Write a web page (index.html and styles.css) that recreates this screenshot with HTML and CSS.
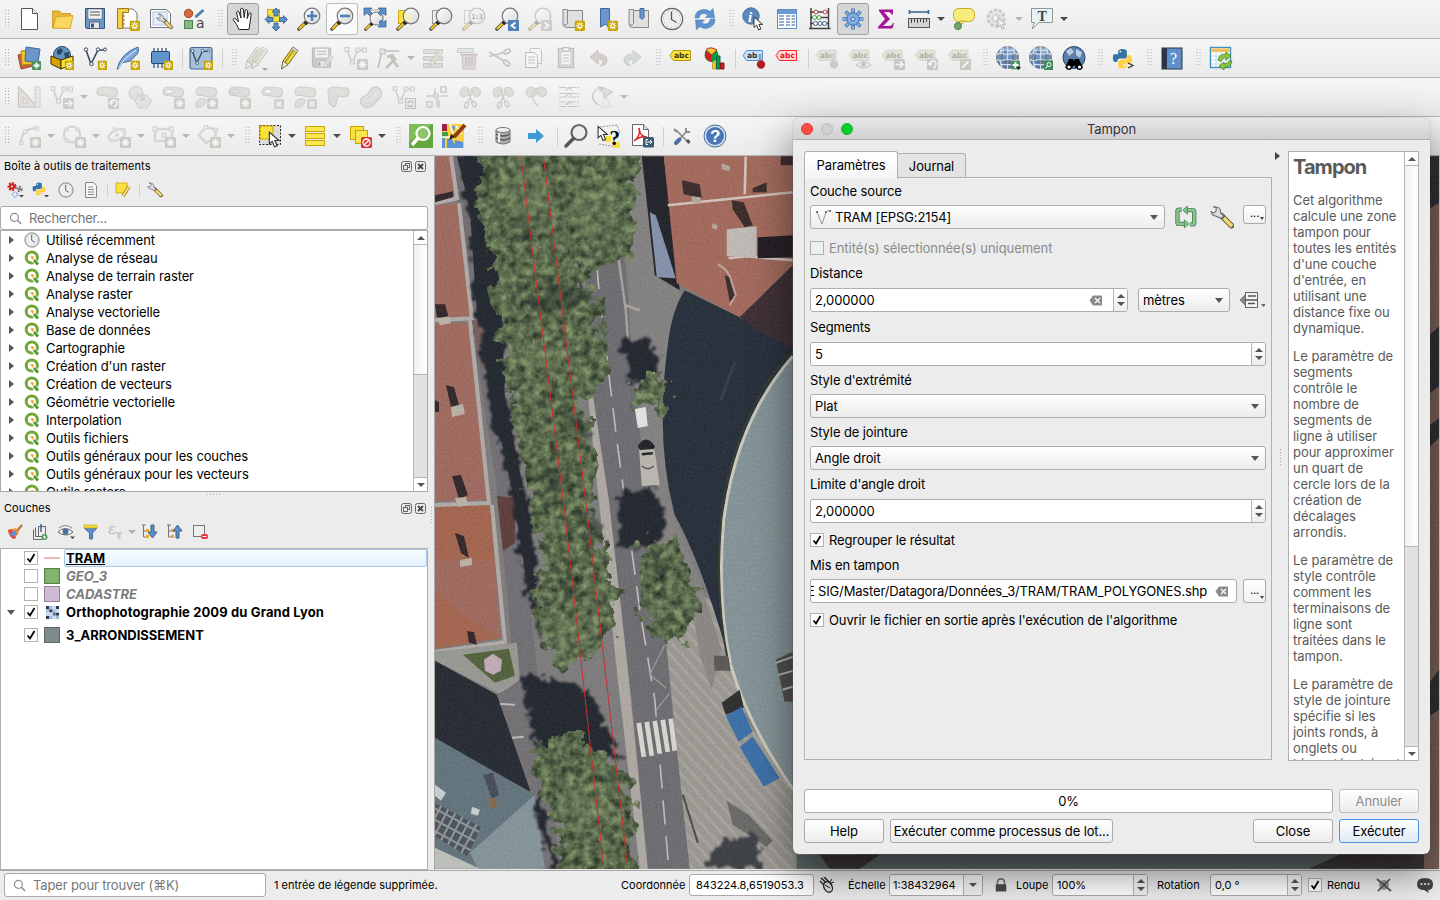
FILE: index.html
```html
<!DOCTYPE html>
<html lang="fr">
<head>
<meta charset="utf-8">
<title>QGIS</title>
<link rel="stylesheet" href="styles.css">
</head>
<body>
<svg class="defs" width="0" height="0">
<defs>
<linearGradient id="glass" x1="0" y1="0" x2="1" y2="1"><stop offset="0" stop-color="#fff"/><stop offset="1" stop-color="#d5d8d8"/></linearGradient>
<linearGradient id="blueg" x1="0" y1="0" x2="0" y2="1"><stop offset="0" stop-color="#8fb4de"/><stop offset="1" stop-color="#3f6fae"/></linearGradient>
<symbol id="star" viewBox="0 0 11 11"><rect width="11" height="11" rx="1.5" fill="#c8a500"/><path d="M5.5 1.5v8M1.6 5.5h7.8M2.8 2.8l5.4 5.4M8.2 2.8L2.8 8.200" stroke="#fff" stroke-width="1.2"/><circle cx="5.500" cy="5.500" r="1.200" fill="#c8a500"/></symbol>
<symbol id="starg" viewBox="0 0 11 11"><rect width="11" height="11" rx="1.500" fill="#8d8a76"/><path d="M5.500 1.500v8M1.600 5.500h7.800M2.800 2.800l5.400 5.400M8.200 2.800L2.800 8.200" stroke="#fff" stroke-width="1.300"/></symbol>
<symbol id="xg" viewBox="0 0 11 11"><rect width="11" height="11" rx="1.500" fill="#a58f8f"/><path d="M3 3l5 5M8 3L3 8" stroke="#fff" stroke-width="2"/></symbol>
<symbol id="plus" viewBox="0 0 9 9"><rect width="9" height="9" rx="1" fill="#4f9060"/><path d="M4.500 1.500v6M1.500 4.500h6" stroke="#fff" stroke-width="1.800"/></symbol>
<symbol id="mag" viewBox="0 0 24 24"><path d="M2 22L9 15" stroke="#555" stroke-width="3.600" stroke-linecap="round"/><path d="M2 22L7.500 16.500" stroke="#f5c518" stroke-width="2.200"/><path d="M8 17l2-2" stroke="#222" stroke-width="3.500"/><circle cx="15" cy="9" r="7.800" fill="url(#glass)" stroke="#777" stroke-width="1.200"/></symbol>
<symbol id="ptr" viewBox="0 0 12 15"><path d="M1 1v10.500l2.600-2.300 2 4.800 2.300-1-2-4.600h3.600z" fill="#fff" stroke="#333" stroke-width="1"/></symbol>
<symbol id="vee" viewBox="0 0 24 24"><path d="M3 4l5 14L15 4h7" fill="none" stroke="#3a4a5c" stroke-width="1.600"/><g fill="#fff" stroke="#3a4a5c"><circle cx="3" cy="3.500" r="1.700"/><circle cx="8.500" cy="18" r="1.700"/><circle cx="15" cy="3.500" r="1.700"/><circle cx="22" cy="3.500" r="1.500"/></g></symbol>
<symbol id="veeg" viewBox="0 0 24 24"><path d="M3 4l5 13L14 4h7" fill="none" stroke="#888" stroke-width="1.500"/><g fill="#ddd" stroke="#888"><rect x="1" y="1.500" width="4" height="4"/><rect x="6.500" y="14" width="4" height="4"/><rect x="12" y="2" width="4" height="4"/><rect x="18.500" y="2" width="4" height="4"/></g></symbol>
<symbol id="clock" viewBox="0 0 24 24"><circle cx="12" cy="12" r="10.700" fill="#eee" stroke="#666" stroke-width="1.200"/><circle cx="12" cy="12" r="8.500" fill="none" stroke="#888" stroke-dasharray=".8 3.650"/><path d="M11.500 4.500v8l5 3" fill="none" stroke="#555" stroke-width="1.300"/></symbol>
<symbol id="py" viewBox="0 0 24 24"><path d="M7 11V4q0-3 5-3t5 3v5q0 3-3 3H9q-3 0-3 4H4q-3 0-3-5t3-4h8" fill="#3673a5"/><path d="M17 8h2q4 0 4 5t-4 5h-7v1h5v2q0 2-5 2t-5-2v-4q0-4 4-4h4q2 0 2-3z" fill="#ffd040"/><circle cx="9.500" cy="4" r="1" fill="#fff"/><circle cx="14.500" cy="20.500" r="1" fill="#fff"/></symbol>
<symbol id="globe" viewBox="0 0 24 24"><circle cx="11.500" cy="11.500" r="11" fill="url(#blueg)" stroke="#667" stroke-width=".8"/><path d="M1 8h21M1 14h21M4 4.500h15M4 18.500h15M11.500 0v23M6 1q-4 10 0 21M17 1q4 10 0 21" fill="none" stroke="#d5dde4" stroke-width="1.300"/><path d="M3 8h4v6H3zM8 4.500h3v3H8zM16 8h4v6h-4zM8 14h7v4H8z" fill="#667" opacity=".6"/></symbol>
<symbol id="tagg" viewBox="0 0 24 24"><path d="M5 4h16v10.500H5L1 9z" fill="#c8c6a8" stroke="#999" stroke-width=".8"/><text x="5" y="12" class="tg">abc</text></symbol>
<symbol id="blob" viewBox="0 0 24 24"><path d="M2 7Q2 2 8 2t9 1q5-1 5.500 4T18 12t-7-1-6-.5Q2 10 2 7z" fill="#b9bcae" stroke="#888" stroke-width="1.200"/></symbol>
<symbol id="blobh" viewBox="0 0 24 24"><use href="#blob"/><ellipse cx="8" cy="6.500" rx="4" ry="2.300" fill="#f5f5f5" stroke="#888"/></symbol>
<symbol id="sciss" viewBox="0 0 24 24"><path d="M2 8q0-6 6-6 4 0 3.500 6Q9 12 5 12 2 11 2 8zM13 4q3-3 7-1 4 3 2 7-2 3-6 1-3-2-3-7z" fill="#b4b8aa" stroke="#888"/><path d="M9 4l5 13M15 5l-5 12" stroke="#888" stroke-width="1.500"/><ellipse cx="8.500" cy="20" rx="1.800" ry="3" transform="rotate(25 8.500 20)" fill="none" stroke="#888" stroke-width="1.500"/><ellipse cx="16" cy="19" rx="1.800" ry="3" transform="rotate(-25 16 19)" fill="none" stroke="#888" stroke-width="1.500"/></symbol>
<symbol id="q" viewBox="0 0 16 16"><circle cx="7.800" cy="7.500" r="5.600" fill="none" stroke="#71a638" stroke-width="3"/><path d="M8.500 8.500l5 6" stroke="#fff" stroke-width="4.600"/><path d="M10 10l4 4.500" stroke="#4e9a2f" stroke-width="2.800"/><path d="M6 6.500l4-.3-.8 4z" fill="#f6a12c"/></symbol>
<symbol id="pencil" viewBox="0 0 24 24"><path d="M6 15L16 1l5 3.500-10 14L5 22z" fill="#f0dc3c" stroke="#77651a" stroke-width="1"/><path d="M8 16.500L18 2.500" stroke="#a9932e" stroke-width="1.500"/><path d="M6 15l5 3.500L4.500 23z" fill="#fbe8c8" stroke="#555" stroke-width=".8"/><path d="M16 1l5 3.500-1.500 2-5-3.500z" fill="#ddd" stroke="#777" stroke-width=".6"/></symbol>
<symbol id="wrench" viewBox="0 0 24 24"><path d="M11 10l10 10" stroke="#6e6740" stroke-width="5.500" stroke-linecap="round"/><path d="M13.500 12.500l8 8" stroke="#f1d775" stroke-width="3.500"/><path d="M3 1.500l3 1v3l-2 2-3-1q1 4 5 4.200L11 13l2.500-2.500L10.500 8Q11 1 3 1.500z" fill="#ddd" stroke="#666" stroke-width="1"/></symbol>
<symbol id="floppy" viewBox="0 0 24 24"><path d="M2.500 1.500h19v20h-18l-1-1z" fill="#6a96c8" stroke="#2e5581" stroke-width="1"/><rect x="5" y="2" width="14" height="10" fill="#f2f2f2" stroke="#555" stroke-width=".5"/><path d="M7 5h10M7 8h10" stroke="#555"/><rect x="6.500" y="15" width="10" height="6.500" fill="#e6e6e6" stroke="#444" stroke-width=".7"/><rect x="8" y="16.500" width="3" height="4" fill="#2f5688"/></symbol>
<symbol id="scroll" viewBox="0 0 24 24"><path d="M6.500 3.500h15v17H6q-4 0-4-3.500V2.500h4.500v14q-1 2-3.500 1.500" fill="#e0e0e0" stroke="#888" stroke-width="1"/></symbol>
<symbol id="search" viewBox="0 0 14 14"><circle cx="5.800" cy="5.800" r="4.300" fill="none" stroke="#888" stroke-width="1.200"/><path d="M9 9l4 4" stroke="#888" stroke-width="1.500"/></symbol>
<symbol id="check" viewBox="0 0 14 14"><path d="M3.500 7.500L6 10.500 10.500 3" fill="none" stroke="#000" stroke-width="1.800"/></symbol>
<symbol id="del" viewBox="0 0 14 11"><path d="M4 .5h9v10H4L.5 5.500z" fill="#8a8a8a"/><path d="M6 3l5 5M11 3L6 8" stroke="#fff" stroke-width="1.200"/></symbol>
<symbol id="float" viewBox="0 0 11 11"><rect x=".5" y=".5" width="10" height="10" rx="2" fill="none" stroke="#666"/><rect x="4.500" y="2.500" width="4" height="4" fill="none" stroke="#666"/><rect x="2.500" y="4.500" width="4" height="4" fill="#ececec" stroke="#666"/></symbol>
<symbol id="close" viewBox="0 0 11 11"><rect x=".5" y=".5" width="10" height="10" rx="2" fill="none" stroke="#666"/><path d="M3 3l5 5M8 3L3 8" stroke="#444" stroke-width="1.800"/></symbol>
</defs>
</svg>

<div class="app">
<div class="bar">
 <i class="grip"></i>
 <b><svg class="ic"><path d="M4.500 1.500h11l5 5v16h-16z" fill="#fff" stroke="#555"/><path d="M15.500 1.500v5h5" fill="#eee" stroke="#555"/></svg></b>
 <b><svg class="ic"><path d="M2.500 21V4h7l2 2.500h9V21z" fill="#e9b738" stroke="#cf9d2a"/><path d="M3 21L6 10l17-1.500L20 21.500z" fill="#fbd75f" stroke="#d8a934"/></svg></b>
 <b><svg class="ic"><use href="#floppy"/></svg></b>
 <b><svg class="ic"><path d="M2 2h15l4 4v15H2z" fill="#fff" stroke="#777"/><path d="M1.500 1.500h11v4h-6v16h-5z" fill="#f5cf4c" stroke="#a07c17"/><path d="M7 5v16M7 9h2M7 13h2M7 17h2" stroke="#a07c17"/><use href="#star" x="13.500" y="13.500" width="10.500" height="10.500"/></svg></b>
 <b><svg class="ic"><path d="M1.500 2.500h16l4 4v14h-20z" fill="#fff" stroke="#777"/><rect x="4" y="5" width="14" height="13" fill="#e7eefb" stroke="#aec2e5"/><use href="#wrench" x="7" y="6" width="17" height="17"/></svg></b>
 <b><svg class="ic"><circle cx="6.500" cy="6.500" r="4.200" fill="#d2693f" stroke="#a5461f"/><path d="M13.500 10l8-7" stroke="#4f7bab" stroke-width="2.800"/><rect x="2.500" y="13.500" width="8" height="8" fill="#88b888" stroke="#4b8352"/><text x="14" y="21" class="ta">a</text></svg></b>
 <i class="grip"></i>
 <b class="on"><svg class="ic"><path d="M8 22.500Q6 17 2 12.500q1-2.500 3.500 0L7.500 15 5.500 5q1-2 2.500 0l2 6-.5-9q1.300-1.700 2.700 0l1 8.500 1-7.500q1.500-1.200 2.500.5l-.5 8 2-5.500q2-.5 2 1L19 16l-1 6.500z" fill="#fff" stroke="#222"/></svg></b>
 <b><svg class="ic"><rect x="3.500" y="2.500" width="12" height="12" fill="#fbe23a" stroke="#c5a91a"/><path d="M12 1l4 4h-2v4h-4V5H8zM12 24l4-4h-2v-4h-4v4H8zM1 12.500l4-4v2h4v4H5v2zM23.500 12.500l-4-4v2h-4v4h4v2z" fill="#5b8ec6" stroke="#2f5b90" stroke-width=".8"/></svg></b>
 <b><svg class="ic"><use href="#mag"/><path d="M15 4v10M10 9h10" stroke="#4f80b8" stroke-width="2.600"/></svg></b>
 <b class="hov"><svg class="ic"><use href="#mag"/><path d="M10 9h10" stroke="#4f80b8" stroke-width="2.600"/></svg></b>
 <b><svg class="ic"><path d="M4 3h16v16" fill="none" stroke="#aaa"/><use href="#mag" x="1" y="4" width="20" height="20"/><path d="M1 1h8L6.500 3.500 9 6 6.500 8.500 4 6 1 8.500zM23 1h-8l2.500 2.500L15 6l2.500 2.500L20 6l3 2.500zM23 20h-8l2.500-2.500L16 15l2-2 2.500 2.500L23 13z" fill="#5b8ec6" stroke="#2f5b90" stroke-width=".7"/></svg></b>
 <b><svg class="ic"><rect x="2.500" y="3.500" width="12" height="13" fill="#fbe23a" stroke="#c5a91a"/><use href="#mag"/><path d="M8.500 6h6v9q-5 0-6-6z" fill="#f6eea5" opacity=".7"/></svg></b>
 <b><svg class="ic"><rect x="3.500" y="3.500" width="12" height="13" fill="#eee" stroke="#999"/><use href="#mag"/></svg></b>
 <b class="off"><svg class="ic"><rect x="2.500" y="3.500" width="12" height="13" fill="#eee" stroke="#999"/><use href="#mag"/><text x="9" y="12" class="t11">1:1</text></svg></b>
 <b><svg class="ic"><use href="#mag"/><rect x="13" y="13" width="11" height="11" fill="#4f80b8"/><path d="M20.500 15.500l-4 3 4 3" fill="none" stroke="#fff" stroke-width="1.800"/></svg></b>
 <b class="off"><svg class="ic"><use href="#mag"/><rect x="13" y="13" width="11" height="11" fill="#999"/><path d="M16.500 15.500l4 3-4 3" fill="none" stroke="#fff" stroke-width="1.800"/></svg></b>
 <b><svg class="ic"><use href="#scroll"/><use href="#star" x="13.500" y="13.500" width="10.500" height="10.500"/></svg></b>
 <b><svg class="ic"><path d="M6.500 1.500h9v20l-4-4.500-5 3z" fill="#6a96c8" stroke="#3c689e"/><use href="#star" x="13.500" y="13.500" width="10.500" height="10.500"/></svg></b>
 <b><svg class="ic"><use href="#scroll"/><path d="M13 1.500h4v9l-2 2-2-2z" fill="#6a96c8" stroke="#3c689e"/></svg></b>
 <b><svg class="ic"><use href="#clock"/></svg></b>
 <b><svg class="ic"><path d="M2 11Q2 3 11 2.500q4 0 6 2l3-3 1.500 9h-9l2.500-3q-8-3-9 3.500zM22 12q0 8-9 9.500-4 0-6-2l-3.500 3-1-9.500h9l-3 3q7 3.500 9-4z" fill="#5f93cf" stroke="#4679b5" stroke-width=".6"/></svg></b>
 <i class="grip"></i>
 <b><svg class="ic"><circle cx="9" cy="9" r="8.200" fill="#5a88bd" stroke="#4a75a6"/><text x="6" y="14.500" class="ti">i</text><use href="#ptr" x="11" y="9" width="12" height="15"/></svg></b>
 <b><svg class="ic"><rect x="2.500" y="2.500" width="19" height="19" fill="#fff" stroke="#5f8fc5"/><path d="M3 3h18v4H3z" fill="#6a9bd3"/><path d="M4 9h5M11 9h4M16.500 9H20M4 12h5M11 12h4M16.500 12H20M4 15h5M11 15h4M16.500 15H20M4 18h5M11 18h4M16.500 18H20" stroke="#6f93bd" stroke-width="1.300"/></svg></b>
 <b><svg class="ic"><path d="M3 1v20M20.500 1v20M1 21.500h21.500M2 5h19M2 10.500h19M2 16.500h19" stroke="#444" stroke-width="1.500" fill="none"/><g fill="#fff"><g stroke="#c44"><circle cx="8" cy="5" r="2"/><circle cx="17" cy="5" r="2"/></g><g stroke="#4a4"><circle cx="6.500" cy="10.500" r="2"/><circle cx="11" cy="10.500" r="2"/></g><g stroke="#468"><circle cx="7.500" cy="16.500" r="2"/><circle cx="12" cy="16.500" r="2"/><circle cx="16.500" cy="16.500" r="2"/></g></g></svg></b>
 <b class="on"><svg class="ic"><g stroke="#3d6fb0" stroke-width="3.600"><path d="M12 1.500v21M1.500 12h21M4.600 4.600l14.800 14.800M19.400 4.600L4.600 19.400"/></g><g stroke="#82aee2" stroke-width="2"><path d="M12 2v20M2 12h20M5 5l14 14M19 5L5 19"/></g><circle cx="12" cy="12" r="6.200" fill="#82aee2" stroke="#3d6fb0"/><circle cx="12" cy="12" r="2" fill="#d0dcec" stroke="#3d6fb0"/></svg></b>
 <b><svg class="ic"><path d="M5 2.500h14v5h-1.500q-.5-2.500-3-2.500H10l6 7-7 7h6q3 0 4-3h1l-1.500 5.500H4V20l7-8-6-8z" fill="#a5129c"/></svg></b>
 <b><svg class="ic"><path d="M2 5h20M2.500 3v4M21.500 3v4" stroke="#3a628f" stroke-width="1.600"/><rect x="1.500" y="11.500" width="21" height="9" fill="#d4d4d4" stroke="#555"/><path d="M4.500 12v4M7.500 12v3M10.500 12v4M13.500 12v3M16.500 12v4M19.500 12v3" stroke="#444"/></svg></b>
 <u></u>
 <b><svg class="ic"><rect x="1.500" y="1.500" width="21" height="13" rx="5" fill="#f9eb7c" stroke="#c6ab27"/><path d="M8 14l-2 6 7-6z" fill="#f9eb7c" stroke="#c6ab27"/><circle cx="6" cy="19" r="3.500" fill="#6fa66f" stroke="#4b7c4b"/></svg></b>
 <b class="off"><svg class="ic"><circle cx="11" cy="11" r="8" fill="#ddd" stroke="#888" stroke-width="3" stroke-dasharray="3.500 1.500"/><circle cx="11" cy="11" r="5" fill="#aaa"/><path d="M9 8l5 3-5 3z" fill="#fff"/><use href="#ptr" x="12" y="10" width="11" height="13"/></svg></b>
 <u class="off"></u>
 <b><svg class="ic"><path d="M1.500 1.500h21v14H9L2 22l2.500-6.500h-3z" fill="#e9f3f3" stroke="#8d9a9a"/><text x="7.500" y="13.500" class="tt">T</text></svg></b>
 <u></u>
</div>

<div class="bar">
 <i class="grip"></i>
 <b><svg class="ic"><path d="M1 9l12-3 3 14-12 3z" fill="#c8643a" stroke="#9a4420"/><path d="M4 5l12-1 1 14-12 1z" fill="#efc22f" stroke="#a8841a"/><path d="M9 1l14 2-2 14-13-2z" fill="#6a96c8" stroke="#3f6898"/><use href="#plus" x="15" y="15" width="9" height="9"/></svg></b>
 <b><svg class="ic"><circle cx="12" cy="9" r="8.500" fill="#6791bd" stroke="#274c77"/><path d="M7 4l4-2 2 3-3 4-3-1zM14 7l5-1v5l-4 1z" fill="#284869"/><path d="M1 10l10 4v9L1 18z" fill="#d9a400" stroke="#3a3000"/><path d="M11 14l12-4v8l-12 5z" fill="#fbe23a" stroke="#3a3000"/><use href="#star" x="14.500" y="14.500" width="9.500" height="9.500"/></svg></b>
 <b><svg class="ic"><use href="#vee"/><use href="#star" x="14.500" y="14.500" width="9.500" height="9.500"/></svg></b>
 <b><svg class="ic"><path d="M1 23Q5 7 22 1q2 6-4 10-3 5-9 5l-3 1-4 6z" fill="#7ba8d8" stroke="#3f6898"/><path d="M2 22Q8 12 20 4" fill="none" stroke="#e8eef4"/><use href="#star" x="14.500" y="14.500" width="9.500" height="9.500"/></svg></b>
 <b><svg class="ic"><path d="M5 2v20M9 2v20M13 2v20M17 2v20" stroke="#27496f" stroke-width="1.200"/><rect x="2.500" y="5.500" width="18" height="12" rx="1" fill="#5f93cf" stroke="#27496f"/><use href="#star" x="14.500" y="14.500" width="9.500" height="9.500"/></svg></b>
 <s></s>
 <b><svg class="ic"><rect x="1" y="1.500" width="22" height="21.500" rx="2" fill="#a5c0dd" stroke="#48698f" stroke-width="1.200"/><use href="#vee" x="1" y="1" width="20" height="22"/><use href="#star" x="14.500" y="14.500" width="9.500" height="9.500"/></svg></b>
 <s></s>
 <i class="grip"></i>
 <b class="off gray"><svg class="ic"><use href="#pencil" x="-4"/><use href="#pencil" x="2"/><path d="M17 22h6l-3 3z" fill="#222"/></svg></b>
 <b><svg class="ic"><use href="#pencil" x="-1"/></svg></b>
 <b class="off gray"><svg class="ic"><use href="#floppy" x="-1" width="23"/><use href="#pencil" x="10" y="8" width="14" height="15"/></svg></b>
 <b class="off"><svg class="ic"><use href="#veeg"/><use href="#starg" x="13" y="13" width="11" height="11"/></svg></b>
 <b class="off"><svg class="ic"><path d="M5 5L1 22M5 5h17" stroke="#666" stroke-width="1.500"/><rect x="3" y="3" width="5" height="5" fill="#ccc" stroke="#666"/><path d="M10 11l5-2 2 3M13 10l8 11M19 12L9 22" fill="none" stroke="#776" stroke-width="2.500"/></svg></b>
 <u class="off"></u>
 <b class="off gray"><svg class="ic"><path d="M1.500 3.500h19v4h-19zM1.500 10.500h19v4h-19zM1.500 17.500h19v4h-19z" fill="#b7bb8d" stroke="#8c8f6e"/><use href="#pencil" x="5" y="1" width="18" height="21"/></svg></b>
 <b class="off"><svg class="ic"><path d="M2.500 2.500h16v4h-16z" fill="#ccc" stroke="#888"/><path d="M7 9h14l-1 14H8z" fill="#c7b1b1" stroke="#8c7070"/><path d="M5 8.500h18M11 11v9M14 11v9M17 11v9" stroke="#8c7070" stroke-width="1.500"/></svg></b>
 <b class="off"><svg class="ic"><path d="M1 6l15 9M1 10.500l15-4" stroke="#777" stroke-width="1.600"/><ellipse cx="19" cy="5.500" rx="3.500" ry="2" transform="rotate(-25 19 5.500)" fill="none" stroke="#777" stroke-width="1.700"/><ellipse cx="18.500" cy="17" rx="3.500" ry="2" transform="rotate(40 18.500 17)" fill="none" stroke="#777" stroke-width="1.700"/></svg></b>
 <b class="off"><svg class="ic"><path d="M9.500 2.500h9l2 2v13h-11z" fill="#fff" stroke="#777"/><path d="M4.500 6.500h9l3 3v12h-12z" fill="#fff" stroke="#666"/><path d="M7 11h7M7 14h7M7 17h7" stroke="#777"/></svg></b>
 <b class="off"><svg class="ic"><rect x="4.500" y="2.500" width="15" height="19" fill="#bbb" stroke="#666" stroke-width="1.300"/><path d="M7 5h10v14H7z" fill="#fff" stroke="#888"/><path d="M9 1.500h6v4H9z" fill="#ddd" stroke="#666"/><path d="M9 9h6M9 12h6M9 15h6" stroke="#777"/></svg></b>
 <b class="off"><svg class="ic"><path d="M3 11l8-7v4q9 0 9 6 0 5-7 6 4-2 3-5-1-2-5-2v5z" fill="#a9938b" stroke="#8a7169"/></svg></b>
 <b class="off"><svg class="ic"><path d="M21 11l-8-7v4q-9 0-9 6 0 5 7 6-4-2-3-5 1-2 5-2v5z" fill="#a3b3a6" stroke="#82937f"/></svg></b>
 <i class="grip"></i>
 <b><svg class="ic"><path d="M4.500 4.500h17v10h-17L1 9.500z" fill="#fbe23a" stroke="#b6941a"/><text x="5" y="12" class="tg">abc</text></svg></b>
 <b><svg class="ic"><circle cx="9.500" cy="9" r="7" fill="#119a3a"/><path d="M9.500 9L4 3.500Q9 0 15 4z" fill="#fbc52b" stroke="#a33"/><path d="M9.500 9V16Q2 14 3 5z" fill="#d71920"/><path d="M10.500 16.500h3.500V23h-3.500z" fill="#fbc52b" stroke="#a80" stroke-width=".6"/><path d="M14.500 10h3.500v13h-3.500z" fill="#119a3a" stroke="#065"/><path d="M18.500 17h3.500v6h-3.500z" fill="#d71920" stroke="#811"/></svg></b>
 <s></s>
 <b><svg class="ic"><path d="M4.500 4.500h16v10h-16L1 9.500z" fill="#c8e0fb" stroke="#4d8fd6"/><text x="5" y="12" class="tg">ab</text><path d="M18 8v8" stroke="#999" stroke-width="2.500"/><circle cx="19" cy="18.500" r="4.200" fill="#b02020"/></svg></b>
 <b><svg class="ic"><path d="M4.500 4.500h17v10h-17L1 9.500z" fill="#ffd9d9" stroke="#f22"/><text x="5" y="12" class="tg red">abc</text></svg></b>
 <s></s>
 <b class="off"><svg class="ic"><use href="#tagg"/><path d="M18 8v8" stroke="#999" stroke-width="2.500"/><circle cx="19" cy="18.500" r="4.200" fill="#a08a8a"/></svg></b>
 <b class="off"><svg class="ic"><use href="#tagg"/><path d="M8 19q7-7 15 0-8 6-15 0z" fill="#ddd" stroke="#777"/><circle cx="15.500" cy="18.500" r="2.300" fill="#777"/></svg></b>
 <b class="off"><svg class="ic"><use href="#tagg"/><rect x="13" y="13" width="11" height="11" rx="1" fill="#888"/><path d="M14.500 18.500h7M19 15.500l3 3-3 3" stroke="#fff" stroke-width="1.700" fill="none"/></svg></b>
 <b class="off"><svg class="ic"><use href="#tagg"/><rect x="13" y="13" width="11" height="11" rx="1" fill="#888"/><path d="M16 18q0-3 3-3t3 3-3 4M14.500 17l1.500 2 2-2" stroke="#fff" stroke-width="1.500" fill="none"/></svg></b>
 <b class="off"><svg class="ic"><use href="#tagg"/><rect x="13" y="13" width="11" height="11" rx="1" fill="#928c70"/><path d="M15.500 21.500l6-6" stroke="#fff" stroke-width="2"/></svg></b>
 <i class="grip"></i>
 <b><svg class="ic"><use href="#globe"/><use href="#plus" x="15" y="14.500" width="9" height="9"/><path d="M20 21h5l-2.500 3z" fill="#222"/></svg></b>
 <b><svg class="ic"><use href="#globe"/><rect x="15" y="14.500" width="9" height="9.500" fill="#3f8a58"/><circle cx="20" cy="18.500" r="2" fill="none" stroke="#fff"/><path d="M18.500 20l-2 2.500" stroke="#fff"/></svg></b>
 <b><svg class="ic"><circle cx="12" cy="11.500" r="11" fill="#5a80ad" stroke="#24446a"/><path d="M4 5l5-3 3 4-5 4zM14 3l6 3-2 6-4-3z" fill="#b9cce0"/><path d="M7 13h4l1 2 1-2h4l4 9h-7l-2-3-2 3H3z" fill="#000"/><circle cx="7" cy="21" r="2.300" fill="#fff" stroke="#000" stroke-width="1.400"/><circle cx="17.500" cy="21" r="2.300" fill="#fff" stroke="#000" stroke-width="1.400"/></svg></b>
 <i class="grip"></i>
 <b><svg class="ic"><use href="#py" x="1" y="2" width="21" height="21"/><path d="M17 17l5 2.500-5 2.500" fill="none" stroke="#333" stroke-width="1.300"/></svg></b>
 <i class="grip"></i>
 <b><svg class="ic"><rect x="2" y="2" width="20" height="21" fill="#5f8fc7" stroke="#27364a"/><path d="M2 2h5v21H2z" fill="#27364a"/><text x="10" y="17.500" class="tq">?</text></svg></b>
 <i class="grip"></i>
 <b><svg class="ic"><rect x="1.500" y="1.500" width="20" height="20" fill="#fff" stroke="#3c93b9" stroke-width="1.400"/><path d="M2.500 2.500h18v3.500h-18z" fill="#f5c05a"/><path d="M2 10h19M2 14h19M2 18h19M7 6v15M12 6v15M17 6v15" stroke="#b6dbec"/><path d="M9 14q1-6 8-6V6l5 4-5 4v-2.500q-4 0-5 4zM23 15q-1 6-8 6.500V24l-5-4 5-4v2q4 0 5-3z" fill="#8cc63c" stroke="#45801a" stroke-width=".8"/></svg></b>
</div>

<div class="bar dis">
 <i class="grip"></i>
 <b class="off"><svg class="ic"><path d="M1.500 1.500l19 20.500h-19z" fill="#d6bdb6" stroke="#776" stroke-width="1.200"/><path d="M6 12v6h5z" fill="#f3f3f3" stroke="#776"/><path d="M18 2h5v20h-5zM18 5h3M18 9h3M18 13h3M18 17h3" fill="#ddd" stroke="#888"/></svg></b>
 <b class="off"><svg class="ic"><use href="#veeg"/><rect x="13" y="13" width="11" height="11" rx="1" fill="#888"/><path d="M14.500 18.500h7M19 15.500l3 3-3 3" stroke="#fff" stroke-width="1.700" fill="none"/></svg></b>
 <u class="off"></u>
 <b class="off"><svg class="ic"><use href="#blob"/><rect x="13" y="13" width="11" height="11" rx="1" fill="#888"/><path d="M16 18q0-3 3-3t3 3-3 4M14.500 17l1.500 2 2-2" stroke="#fff" stroke-width="1.500" fill="none"/></svg></b>
 <b class="off"><svg class="ic"><circle cx="8" cy="8" r="7" fill="#c3c6bb" stroke="#888"/><path d="M11 10h8l4.500 6-4.500 7h-8l-4-7z" fill="#c3c8cc" stroke="#888"/><path d="M8 8l8 7M16 11v4h-4" stroke="#777" fill="none"/></svg></b>
 <b class="off"><svg class="ic"><use href="#blobh"/><use href="#starg" x="13" y="13" width="11" height="11"/></svg></b>
 <b class="off"><svg class="ic"><use href="#blob"/><path d="M2 22q-1-6 4-8 7-1 6 2-2 8-10 6z" fill="#b9bcae" stroke="#888"/><use href="#starg" x="13" y="13" width="11" height="11"/></svg></b>
 <b class="off"><svg class="ic"><use href="#blob"/><ellipse cx="8" cy="6.500" rx="4" ry="2.300" fill="#bbb" stroke="#888"/><use href="#starg" x="13" y="13" width="11" height="11"/></svg></b>
 <b class="off"><svg class="ic"><use href="#blobh"/><use href="#xg" x="14" y="14" width="10" height="10"/></svg></b>
 <b class="off"><svg class="ic"><use href="#blob"/><path d="M2 22q-1-6 4-8 7-1 6 2-2 8-10 6z" fill="#b9bcae" stroke="#888"/><use href="#xg" x="14" y="14" width="10" height="10"/></svg></b>
 <b class="off"><svg class="ic"><path d="M2 7q0-5 7-5l8 1q6-1 6 4t-6 5l-5-1q-1 2-2 9-2 3-4 1-4-3-3-8z" fill="#b9bcae" stroke="#888" stroke-width="1.200"/></svg></b>
 <b class="off"><svg class="ic"><path d="M12 4q5-4 9 0t-1 10l-7 7q-6 3-10-1t1-8q6-2 8-8z" fill="#c6c8ba" stroke="#888" stroke-width="1.400"/><path d="M14 6q4-3 6 1t-8 11q-5 2-7-1t4-4q4-1 5-7z" fill="none" stroke="#999"/></svg></b>
 <b class="off"><svg class="ic"><use href="#veeg"/><rect x="13.500" y="13.500" width="10" height="10" fill="#ddd" stroke="#666"/><path d="M15.500 18q3-4 6 0M21.500 20q-3 3-6 0" stroke="#666" fill="none" stroke-width="1.500"/></svg></b>
 <b class="off"><svg class="ic"><path d="M10 3v8H1M14 23v-8M16 11h7M10 11h4M12 13v9" stroke="#888" stroke-width="1.500" fill="none"/><rect x="9" y="9" width="4" height="4" fill="#ccc" stroke="#777"/><use href="#starg" x="15" y="1" width="7" height="7"/><use href="#xg" x="1" y="16" width="7" height="7"/></svg></b>
 <b class="off"><svg class="ic"><use href="#sciss"/></svg></b>
 <b class="off"><svg class="ic"><use href="#sciss"/></svg></b>
 <b class="off"><svg class="ic"><path d="M2 8q0-6 6-6 3 1 4 3 3-5 9-2 3 4 1 7-4 4-9-1-4 4-8 3-3-1-3-4z" fill="#b4b8aa" stroke="#888"/><path d="M8 8q0 8 6 13M9 4h6M9 7h6" stroke="#888" stroke-width="1.300" fill="none"/></svg></b>
 <b class="off"><svg class="ic"><path d="M2 2.500h20M2 8.500h20M2 12h20M2 17h20M2 21.500h20M9 5.500l3-3 3 3M9 11l3-3 3 3M9 20l3-3 3 3" fill="none" stroke="#777" stroke-width="1.200" stroke-dasharray="8 1"/></svg></b>
 <b class="off"><svg class="ic"><path d="M12 2l11 5-9 6z" fill="#a9b6a9" stroke="#888"/><path d="M16 12l5 10H11z" fill="#eee" stroke="#aaa"/><path d="M9 20Q-2 13 6 5l6-2M8 2l4 1-2 4" fill="none" stroke="#777" stroke-width="1.300"/></svg></b>
 <u class="off"></u>
</div>

<div class="bar">
 <i class="grip"></i>
 <b class="off"><svg class="ic"><path d="M4 19Q4 5 19 4" fill="none" stroke="#999" stroke-width="2"/><g fill="#ddd" stroke="#999"><rect x="2.500" y="17" width="3.500" height="3.500"/><rect x="6.500" y="6" width="3.500" height="3.500"/><rect x="18" y="2.500" width="3.500" height="3.500"/></g><use href="#starg" x="13" y="13" width="11" height="11"/></svg></b><u class="off"></u>
 <b class="off"><svg class="ic"><circle cx="10" cy="10.500" r="8" fill="none" stroke="#aaa" stroke-width="2.500"/><g fill="#ddd" stroke="#999"><rect x="3" y="4" width="3" height="3"/><rect x="14" y="4" width="3" height="3"/><rect x="3" y="15" width="3" height="3"/></g><use href="#starg" x="13" y="13" width="11" height="11"/></svg></b><u class="off"></u>
 <b class="off"><svg class="ic"><ellipse cx="10" cy="11" rx="9" ry="5" transform="rotate(-25 10 11)" fill="none" stroke="#aaa" stroke-width="2.200"/><circle cx="10" cy="11" r="1.800" fill="#999"/><g fill="#ddd" stroke="#999"><rect x="6" y="4" width="3" height="3"/><rect x="15" y="5" width="3" height="3"/></g><use href="#starg" x="13" y="13" width="11" height="11"/></svg></b><u class="off"></u>
 <b class="off"><svg class="ic"><rect x="3" y="5" width="17" height="12" fill="none" stroke="#aaa" stroke-width="2.500"/><g fill="#ddd" stroke="#999"><rect x="1" y="3" width="4" height="4"/><rect x="10" y="9" width="4" height="4"/><rect x="17.500" y="3" width="4" height="4"/></g><use href="#starg" x="13" y="13" width="11" height="11"/></svg></b><u class="off"></u>
 <b class="off"><svg class="ic"><path d="M9 3l10 3-1 9-9 4-7-8z" fill="none" stroke="#aaa" stroke-width="2.500"/><g fill="#ddd" stroke="#999"><rect x="7" y="1.500" width="3.500" height="3.500"/><rect x="17" y="4" width="3.500" height="3.500"/></g><use href="#starg" x="13" y="13" width="11" height="11"/></svg></b><u class="off"></u>
 <i class="grip"></i>
 <b><svg class="ic"><rect x="1.500" y="1.500" width="21" height="19" fill="#ddd" stroke="#222" stroke-dasharray="2 1.500"/><rect x="2" y="2" width="13" height="13" fill="#fbe23a" stroke="#c8a500"/><use href="#ptr" x="10" y="7" width="14" height="17"/></svg></b><u></u>
 <b><svg class="ic"><path d="M2.500 2.500h19v5h-19zM2.500 9.500h19v5h-19zM2.500 16.500h19v5h-19z" fill="#fbe650" stroke="#c8a500"/></svg></b><u></u>
 <b><svg class="ic"><rect x="2.500" y="2.500" width="13" height="13" fill="#fbe23a" stroke="#c8a500"/><rect x="7.500" y="6.500" width="12" height="13" fill="#fbe650" stroke="#c8a500"/><rect x="13" y="13" width="11" height="11" rx="1.500" fill="#d33"/><circle cx="18.500" cy="18.500" r="3.500" fill="none" stroke="#fff" stroke-width="1.300"/><path d="M16 21l5-5" stroke="#fff" stroke-width="1.300"/></svg></b><u></u>
 <i class="grip"></i>
 <b><svg class="ic"><rect width="24" height="24" fill="#64a83f"/><path d="M0 0h24L0 18z" fill="#80bd58"/><circle cx="14" cy="9.500" r="6.500" fill="#8dc569" stroke="#fff" stroke-width="2.200"/><path d="M9 14l-6 7" stroke="#fff" stroke-width="3.500"/></svg></b>
 <b><svg class="ic"><rect width="22" height="24" fill="#f9ce3f"/><path d="M0 0h5v7H0z" fill="#a02040"/><path d="M5 15h5l4 9H5zM0 14h3v10H0zM13 16l8 2v6h-9zM9 2h4l-1 6z" fill="#5b95d8"/><path d="M0 8h6v5H0z" fill="#3f9e4a"/><path d="M0 13h9M8 0l3 9M14 2l6 8" stroke="#fff" stroke-width="1.500" fill="none"/><path d="M23 1L12 13" stroke="#8a3d14" stroke-width="4"/><path d="M13 13l-6 3 2-6z" fill="#222"/></svg></b>
 <i class="grip"></i>
 <b><svg class="ic"><path d="M5 6v12q7 4 14 0V6z" fill="#aaa" stroke="#777"/><ellipse cx="12" cy="6" rx="7" ry="2.500" fill="#eee" stroke="#777"/><path d="M5 10q7 4 14 0M5 14q7 4 14 0" fill="none" stroke="#555" stroke-width="1.300"/><path d="M8 9v9" stroke="#eee" stroke-width="2"/></svg></b>
 <b><svg class="ic"><path d="M4 9h8V5l8 7-8 7v-4H4z" fill="#3b9ad3"/></svg></b>
 <s></s>
 <b><svg class="ic"><circle cx="15" cy="8.500" r="7.500" fill="#eee" stroke="#666" stroke-width="2.200"/><path d="M9.500 14.500L2 22" stroke="#555" stroke-width="3.500" stroke-linecap="round"/></svg></b>
 <b><svg class="ic"><path d="M3 3l17-2 3 8M2 20l18 3" stroke="#999" fill="none" stroke-dasharray="2 1"/><path d="M8 12h6v6H8zM16 18h7v6h-7z" fill="#f9e03c"/><use href="#ptr" x="0" y="1" width="13" height="17"/><text x="12.500" y="20.500" class="tw">?</text></svg></b>
 <b><svg class="ic"><path d="M2.500.5h11l5 5v16h-16z" fill="#fff" stroke="#666"/><path d="M13.500.5v5h5" fill="#ddd" stroke="#666"/><path d="M4 17q7-5 5-13 1 9 8 9-7-1-13 4z" fill="none" stroke="#d22" stroke-width="1.500"/><rect x="13" y="13" width="11" height="10.500" rx="1.500" fill="#3d5a73"/><path d="M18 15.500h-2v5h2M17 18h5M20 16l2 2-2 2" stroke="#fff" fill="none"/></svg></b>
 <s></s>
 <b><svg class="ic"><path d="M6 6l12 12M17 7L7 18" stroke="#888" stroke-width="1.600"/><path d="M16 4v4h4M4 5l3 3" stroke="#888" stroke-width="1.800" fill="none"/><path d="M9.500 15.500L6 19" stroke="#4a6fa5" stroke-width="4" stroke-linecap="round"/><path d="M17 16l2.500 3" stroke="#555" stroke-width="3"/></svg></b>
 <b><svg class="ic"><circle cx="12" cy="12" r="11" fill="#dbe5f3" stroke="#41689f" stroke-width="1"/><circle cx="12" cy="12" r="9" fill="#4b77b8"/><text x="7" y="18" class="th">?</text></svg></b>
</div>

<div class="main">
<div class="left">
 <div class="dock">
  <div class="dt"><span>Boîte à outils de traitements</span><svg class="wb"><use href="#float"/></svg><svg class="wb"><use href="#close"/></svg></div>
  <div class="dtools">
   <svg class="i16" viewBox="0 0 16 16"><g fill="none" stroke-dasharray="2 1.200"><circle cx="5" cy="4.500" r="3.500" stroke="#c22" stroke-width="2"/><circle cx="12.500" cy="7" r="2.400" stroke="#777" stroke-width="1.600"/><circle cx="8" cy="12.500" r="2.500" stroke="#89b1e3" stroke-width="1.600"/></g><circle cx="5" cy="4.500" r="3" fill="#c22"/><circle cx="5" cy="4.500" r="1" fill="#eee"/><circle cx="12.500" cy="7" r="1.500" fill="#777"/><path d="M12 13h5l-2.500 2.500z" fill="#444"/></svg>
   <svg class="i16" viewBox="0 0 16 16"><use href="#py" width="14" height="14"/><path d="M12 13h5l-2.500 2.500z" fill="#444"/></svg>
   <svg class="i16"><use href="#clock"/></svg>
   <svg class="i16" viewBox="0 0 16 16"><path d="M2.500.5h8l3 3v12h-11z" fill="#f5f5f5" stroke="#888"/><path d="M5 5h5M5 7.500h6M5 10h6M5 12.500h6" stroke="#888"/></svg>
   <em></em>
   <svg class="i16" viewBox="0 0 16 16"><path d="M1 1h11v10H1z" fill="#fbe23a" stroke="#d3b32a"/><path d="M14 4.500L8 14" stroke="#9a8a3a" stroke-width="3.500"/><path d="M14 4.500L8 14" stroke="#f5dd6c" stroke-width="2"/></svg>
   <em></em>
   <svg class="i16"><use href="#wrench"/></svg>
  </div>
  <div class="find"><svg class="s13"><use href="#search"/></svg><span>Rechercher...</span></div>
  <div class="tree">
   <ul>
    <li><svg class="i16"><use href="#clock"/></svg>Utilisé récemment</li>
    <li><svg class="i16"><use href="#q"/></svg>Analyse de réseau</li>
    <li><svg class="i16"><use href="#q"/></svg>Analyse de terrain raster</li>
    <li><svg class="i16"><use href="#q"/></svg>Analyse raster</li>
    <li><svg class="i16"><use href="#q"/></svg>Analyse vectorielle</li>
    <li><svg class="i16"><use href="#q"/></svg>Base de données</li>
    <li><svg class="i16"><use href="#q"/></svg>Cartographie</li>
    <li><svg class="i16"><use href="#q"/></svg>Création d'un raster</li>
    <li><svg class="i16"><use href="#q"/></svg>Création de vecteurs</li>
    <li><svg class="i16"><use href="#q"/></svg>Géométrie vectorielle</li>
    <li><svg class="i16"><use href="#q"/></svg>Interpolation</li>
    <li><svg class="i16"><use href="#q"/></svg>Outils fichiers</li>
    <li><svg class="i16"><use href="#q"/></svg>Outils généraux pour les couches</li>
    <li><svg class="i16"><use href="#q"/></svg>Outils généraux pour les vecteurs</li>
    <li><svg class="i16"><use href="#q"/></svg>Outils rasters</li>
   </ul>
   <div class="sb"><i class="up"></i><div class="thumb t1"></div><div class="track"></div><i class="down"></i></div>
  </div>
 </div>
 <div class="split"></div>
 <div class="dock grow">
  <div class="dt"><span>Couches</span><svg class="wb"><use href="#float"/></svg><svg class="wb"><use href="#close"/></svg></div>
  <div class="dtools two">
   <svg class="i16" viewBox="0 0 16 16"><path d="M1 6l8-2 3 5-5 6q-5-2-6-9z" fill="#f29a2e"/><path d="M1 6l4-1 4 9-2 1q-5-2-6-9z" fill="#e2483c"/><path d="M3 10l5-4 2 4-4 3z" fill="#5c93d0"/><path d="M10 7l5-6" stroke="#c07a3a" stroke-width="2.500"/></svg>
   <svg class="i16" viewBox="0 0 16 16"><path d="M1.500 5.500v10h9M3.500 3.500v9h9M6.500 2.500h7v10h-7z" fill="none" stroke="#666"/><path d="M9 0v8" stroke="#369" stroke-width="1.500"/><circle cx="12.500" cy="13" r="3" fill="#4f9a5c"/><path d="M12.500 11.500v3M11 13h3" stroke="#fff"/></svg>
   <svg class="i16" viewBox="0 0 16 16"><path d="M0 8q7-7 15 0-7 6-15 0z" fill="#fff" stroke="#666"/><circle cx="7.500" cy="7.500" r="3" fill="#456f9f"/><path d="M1 4q6-5 13 0" fill="none" stroke="#888"/><path d="M12 12.500h5L14.500 15z" fill="#444"/></svg>
   <svg class="i16" viewBox="0 0 16 16"><path d="M1 4h13L9.500 9v6h-3V9z" fill="#5f8fc7" stroke="#476f9f"/><path d="M1 1h13v3H1z" fill="#f4d93a" stroke="#c7ad27" stroke-width=".7"/></svg>
   <svg class="i16 off" viewBox="0 0 16 16"><text x="0" y="10" class="te">ε</text><path d="M7 8h8l-2.500 3v4h-3v-4z" fill="#999"/></svg>
   <u class="off"></u>
   <svg class="i16" viewBox="0 0 16 16"><path d="M0 1h4M1.500 1v12H5M1.500 7H5" stroke="#777" fill="none"/><path d="M4 5h3v3H4zM4 11h3v3H4z" fill="#f5a623"/><path d="M9 1h3v7h3l-4.500 6L6 8h3z" fill="#5f8fc7" stroke="#36618f"/></svg>
   <svg class="i16" viewBox="0 0 16 16"><path d="M0 1h4M1.500 1v12H5M1.500 7H5" stroke="#777" fill="none"/><path d="M4 5h3v3H4zM4 11h3v3H4z" fill="#f5a623"/><path d="M9 14h3V7h3l-4.500-6L6 7h3z" fill="#5f8fc7" stroke="#36618f"/></svg>
   <svg class="i16" viewBox="0 0 16 16"><rect x="1.500" y="1.500" width="11" height="11" fill="#eee" stroke="#777"/><rect x="9" y="10" width="7" height="5" rx="2" fill="#e33"/><path d="M10.500 12.500h4" stroke="#fff"/></svg>
  </div>
  <div class="layers">
   <div class="ly"><span class="cb"><svg><use href="#check"/></svg></span><span class="sw line"></span><span class="nm sel">TRAM</span></div>
   <div class="ly"><span class="cb"></span><span class="sw green"></span><span class="nm dim">GEO_3</span></div>
   <div class="ly"><span class="cb"></span><span class="sw lilac"></span><span class="nm dim">CADASTRE</span></div>
   <div class="ly open"><span class="cb"><svg><use href="#check"/></svg></span><svg class="sw ras" viewBox="0 0 4 4"><path d="M0 0h1v1H0zM3 0h1v1H3zM0 3h1v1H0zM1 1h1v1H1zM3 2h1v1H3z" fill="#2d3a55"/><path d="M1 0h1v1H1zM0 1h1v1H0zM2 1h1v1H2zM1 3h1v1H1zM3 3h1v1H3z" fill="#9fbbdc"/><path d="M2 2h1v1H2z" fill="#55709a"/><path d="M2 0h1v1H2zM1 2h1v1H1zM0 2h1v1H0zM3 1h1v1H3zM2 3h1v1H2z" fill="#c9dbef"/></svg><span class="nm wide">Orthophotographie 2009 du Grand Lyon</span></div>
   <div class="ly last"><span class="cb"><svg><use href="#check"/></svg></span><span class="sw slate"></span><span class="nm">3_ARRONDISSEMENT</span></div>
  </div>
 </div>
</div>

<svg class="map" viewBox="435 156 1005 713">
<defs>
<filter id="leaf" filterUnits="userSpaceOnUse" x="430" y="150" width="370" height="725" color-interpolation-filters="sRGB"><feTurbulence type="fractalNoise" baseFrequency=".07" numOctaves="3" seed="7" result="m"/><feDisplacementMap in="SourceGraphic" in2="m" scale="34" xChannelSelector="R" yChannelSelector="G" result="d"/><feTurbulence type="fractalNoise" baseFrequency=".12" numOctaves="3" seed="4" result="n"/><feColorMatrix in="n" values=".520 0 .150 0 .010 .580 0 .150 0 .045 .400 0 .100 0 .040 0 0 0 0 1"/><feGaussianBlur stdDeviation=".7" result="c"/><feComposite in="c" in2="d" operator="in"/><feGaussianBlur stdDeviation=".4"/></filter>
<filter id="rag" filterUnits="userSpaceOnUse" x="430" y="150" width="370" height="725"><feTurbulence type="fractalNoise" baseFrequency=".09" numOctaves="3" seed="9" result="n"/><feDisplacementMap in="SourceGraphic" in2="n" scale="22" xChannelSelector="R" yChannelSelector="G"/><feGaussianBlur stdDeviation=".9"/></filter>
<filter id="soft"><feGaussianBlur stdDeviation=".7"/></filter>
<filter id="grain" x="0" y="0" width="1" height="1" color-interpolation-filters="sRGB"><feTurbulence type="fractalNoise" baseFrequency=".45" numOctaves="3" seed="2"/><feColorMatrix values="1.500 0 0 0 -.25 1.500 0 0 0 -.25 1.500 0 0 0 -.25 0 0 0 0 1"/></filter>
<pattern id="pave" width="11" height="9" patternUnits="userSpaceOnUse" patternTransform="rotate(48)"><path d="M0 3h11" stroke="#b9b4ad" stroke-width="2.500" opacity=".5"/></pattern>
<pattern id="dome" width="5" height="5" patternUnits="userSpaceOnUse" patternTransform="rotate(3)"><path d="M0 1h5" stroke="#768b90" stroke-width="1" opacity=".35"/></pattern>
<pattern id="pan" width="8" height="10" patternUnits="userSpaceOnUse" patternTransform="rotate(28)"><path d="M1 1h6v8H1z" fill="#4d535e"/></pattern>
</defs>
<rect x="435" y="156" width="1005" height="713" fill="#7f7d7d"/>
<g filter="url(#soft)">
<path d="M585 250L624 250L632 340L648 480L672 640L693 869H648L632 700L604 500L590 390Z" fill="#6e6d72"/>
<path d="M624 156L646 156L680 290L664 390L668 500L725 645L700 660L672 640L645 480L630 330Z" fill="#858282"/>
<path d="M587 385L592 388L609 500L627 660L648 869H640L618 680L600 510Z" fill="#b1aba6"/>
<path d="M597 265L600 300L617 440L640 610L655 700L669 869" fill="none" stroke="#c3c1be" stroke-width="1.600" stroke-dasharray="24 12"/>
<path d="M619 260L626 310L628 338M626 305l14 5" fill="none" stroke="#aaa5a0" stroke-width="2.500"/>
<path d="M666 640L690 590L712 600L728 650L748 720L793 792L870 869H690L676 740Z" fill="#9c9892"/>
<path d="M666 640L690 590L712 600L728 650L748 720L793 792L793 869H690L676 740Z" fill="url(#pave)"/>
<path d="M690 590L705 596L722 650L712 690L700 655Z" fill="#8b8885"/>
<path d="M727 801l22 14 24 26-6 6-34-22z" fill="#6b6a68"/><path d="M683 795l15 48" stroke="#4b4949" stroke-width="2"/>
<g stroke="#dcdad3" stroke-width="4.800"><path d="M639 723l5 34M647 722l5 34M655 721l5 33M663 720l5 32M671 719l4 32"/></g>
<path d="M665 645l-15 30 16 13M670 693l-14 18" stroke="#9f9c98" stroke-width="1.200" fill="none"/>
<path d="M642 156H664L680 290L655 275Z" fill="#22242c"/><path d="M650 212L656 215L676 278L657 277Z" fill="#8593ac"/>
<path d="M664 156H793V265L740 317L677 283Z" fill="#a56a5c"/>
<path d="M668 205L793 192M746 156l-1 38M793 260l-46-4-18 2" stroke="#d6c6c0" stroke-width="2.600" fill="none"/>
<path d="M727 229l30-3v31l-30-1z" fill="#c2bdb8"/><path d="M758 237L793 235V257L758 258Z" fill="#241f22"/>
<path d="M682 180l18 4 2 14-18-4zM732 200l12 2 9 23-8 2-12-18zM753 188l14-6v10h-14zM781 156h12v9h-12zM725 275l6 2 5 20-6 4z" fill="#3b2b2c"/><path d="M722 163l8 3v5l-8-2zM692 196l9 1v6l-9-1zM713 223l5 2-1 4-5-1z" fill="#b7a9a2"/><path d="M718 264q12 6 14 18l4 13-6 10" fill="none" stroke="#bfa59b" stroke-width="2"/>
<path d="M685 290L740 317L770 334L793 345V356Q740 420 726 510Q718 590 725 645Q700 560 675 515Q655 440 668 345Q672 310 685 290Z" fill="#272f3b"/>
<path d="M740 317L793 265V348L765 334Z" fill="#3c2e34"/><path d="M735 362l-14 38" stroke="#343d4a" stroke-width="3"/>
<path d="M793 356Q737 420 725 520Q718 600 732 665Q748 725 793 790Z" fill="#869699"/>
<path d="M793 356Q737 420 725 520Q718 600 732 665Q748 725 793 790Z" fill="url(#dome)"/>
<path d="M793 356Q737 420 724 520Q717 600 731 665Q748 725 795 792" fill="none" stroke="#cfccc0" stroke-width="3"/>
<path d="M791 352Q734 416 721 520Q715 600 729 665" fill="none" stroke="#343b2d" stroke-width="2"/>
<path d="M776 660l17-8v50h-8z" fill="#514d49"/><path d="M776 663l17-6M779 675l14-4M783 690l10-3" stroke="#bbb" stroke-width="2"/>
<path d="M714 656h14l3 15h-16z" fill="#5b5855"/><path d="M722 703l18-13 4 18-18 7z" fill="#2e2d2d"/>
<path d="M726 716L742 707L753 732L739 742ZM740 747L753 737L780 778L764 787Z" fill="#3a70ab"/>
<path d="M455 156H490L500 260L505 400L530 520L535 600L515 580L505 500L478 330L468 230Z" fill="#272a35"/>
<path d="M452 156L457 156L470 210L478 330L512 490L530 600L535 650L560 869H540L515 700L508 600L496 480L470 320Z" fill="#727074"/>
<path d="M435 156H451L456 195L435 200ZM435 205L459 203L471 316L435 317ZM435 323L468 322L488 500L435 501ZM435 507L490 504L501 638L435 649Z" fill="#a26b5e"/>
<path d="M435 590L470 620L501 638L435 649ZM435 507L490 504L494 560L435 560Z" fill="#a96347" opacity=".6"/>
<path d="M451 156L457 198L435 203M459 203L472 318L435 320M470 320L489 503L435 505M492 505L505 642L435 652" fill="none" stroke="#b3adaa" stroke-width="4"/>
<path d="M472 320l14 4 8 28v14h-13z" fill="#78605d"/><path d="M497 496l18 2v45l-12 8z" fill="#613c3e"/>
<path d="M435 195l18-4v6l-18 5zM435 304l10 0 4 14-12-1zM446 385l8 2 5 18-8 2zM452 476l9-1 7 20-9 4zM455 533l9 3 5 22-8-5zM467 631l7 1 3 13-8-2zM435 400l4 2v10h-4z" fill="#33262a"/>
<path d="M451 407l12-3 2 10-13 3zM460 560l12-2v7l-12 2zM455 498l11-1 2 8-10 2zM437 318l12-2 2 7-11 2z" fill="#bcb4a6"/>
<path d="M435 652L517 643L520 680L500 694L435 661Z" fill="#9a9a95"/><path d="M463 655l46-6 6 27-20 7z" fill="#53633d"/><path d="M484 660l9-6 9 6-1 11-8 4-8-4z" fill="#c3aeba"/>
<path d="M435 661L497 695L532 793L435 740Z" fill="#252933"/>
<path d="M497 695L520 682L560 869H540L530 790Z" fill="#747276"/>
<path d="M500 704l15 1M512 738l12-1" stroke="#bbb" stroke-width="2"/>
<path d="M435 738L535 795L475 869H435Z" fill="#64747e"/><path d="M470 853L535 795L545 869H478Z" fill="#86959c"/>
<path d="M435 803l46 24-13 30-33-20z" fill="#8f9a97"/><path d="M435 803l46 24-13 30-33-20z" fill="url(#pan)"/><path d="M435 848l45 21h-45z" fill="#bfc3bd"/><path d="M483 775l10-2 6 22-7 4z" fill="#444e58"/><path d="M490 798l7 1-1 9h-7z" fill="#8b6b47"/><path d="M435 785l11 8-5 8-6-5zM472 807l8 3-2 6-7-2z" fill="#ccd2d2"/>
</g>
<g filter="url(#rag)" fill="#23272f">
<path d="M462 156L492 156L502 330L514 440L532 520L545 640L528 600L514 500L484 380L470 230Z"/>
<path d="M520 675L560 680L590 690L606 730L620 755L570 770L535 745Z"/>
<path d="M540 790L560 869H550L535 810Z"/>
<path d="M622 342L650 335L660 360L655 382L628 383Z"/>
<path d="M618 495L655 488L668 520L655 548L620 550Z"/>
<path d="M715 845l40-12 10 36h-60z" fill="#3e4145"/>
</g>
<g filter="url(#leaf)" fill="#5c6b4c">
<path d="M485 140H640L634 200L632 262L590 265L582 285L605 300L602 330L612 350L602 380L580 408L592 430L596 470L592 520L606 555L616 600L612 635L585 660L565 668L542 645L534 600L543 560L530 500L518 440L506 380L498 320L490 260L478 205Z"/>
<path d="M535 745L565 732L590 745L618 762L636 800L634 880H560L558 830L540 800Z"/>
<path d="M634 378L662 372L668 400L655 414L632 404Z"/>
<path d="M640 548L668 538L692 570L700 610L682 648L655 632L638 600Z"/>
</g>
<g filter="url(#rag)" fill="#202a28" opacity=".45"><path d="M555 280l25 10 15 5-20 14-45 2zM560 405l25 15 5 20-28-12zM530 290l20 5-10 20-15-10zM590 510l14 20-12 20-8-20zM560 580l20 8-18 20zM655 550l15 15-10 12-12-9zM545 470l25 4-5 22-18-8zM520 210l14 8-8 18-12-8z"/></g>
<g filter="url(#rag)" fill="#8d9c70" opacity=".22"><path d="M500 180l40-15 10 50-40 20zM570 190l45-20 5 60-40 10zM520 340l50 5-5 30-40-5zM530 620l50-10 10 30-30 15zM560 790l40-10 15 40-40 5z"/></g>
<path d="M635 409l11-2 2 19-10 2z" fill="#e5e7e6"/><path d="M639 446q8-10 15 0l2 12 4 27-18 1z" fill="#bbb9b0"/><path d="M638 446q8-13 17 0l-1 3-14 1zM642 453l11-1v2.500l-11 1z" fill="#202226"/><path d="M642 466q6 5 12 0" stroke="#55575a" stroke-width="1.500" fill="none"/>
<path d="M797 855H1440V869H797Z" fill="#5d6768"/><path d="M820 855h60l-20 14h-30zM1310 869l30-14h100v14z" fill="#3b3435"/>
<path d="M1425 156h15v713h-15z" fill="#7a6057"/><path d="M1425 156h15v47l-15 8zM1425 340l15-14v60l-15 12zM1425 430l15-12v20l-15 14zM1425 690l15-20v40l-15 10z" fill="#2c2e32"/>
<rect x="435" y="156" width="1005" height="713" filter="url(#grain)" opacity=".05"/>
<path d="M521 156L565 514L604 869M543.500 156L587.500 514L628 869" fill="none" stroke="#c8302f" stroke-width="1"/>
</svg>
</div>

<div class="status">
 <div class="loc"><svg class="s13"><use href="#search"/></svg>Taper pour trouver (⌘K)</div>
 <span class="msg">1 entrée de légende supprimée.</span>
 <span class="lb coord">Coordonnée</span><div class="fld f1">843224.8,6519053.3</div>
 <svg class="si" viewBox="0 0 16 16"><path d="M2 1l9 8M1 4l8 8M5 0l8 8" stroke="#222" stroke-width="1.500"/><ellipse cx="9" cy="10" rx="4" ry="5.500" transform="rotate(-30 9 10)" fill="#ddd" stroke="#222" stroke-width="1.300"/><path d="M6 8l5 3M13 2l-2 3M15 5l-3 1" stroke="#222"/></svg>
 <span class="lb ech">Échelle</span><div class="fld f2">1:38432964<i class="dc"></i></div>
 <svg class="si lock" viewBox="0 0 16 16"><path d="M4 8V5q0-4 4-4t4 4v3" fill="none" stroke="#777" stroke-width="1.800"/><rect x="2" y="7" width="12" height="8.500" rx="1" fill="#4a4a4a"/></svg>
 <span class="lb">Loupe</span><div class="fld f3">100%<i class="sp"></i></div>
 <span class="lb rot">Rotation</span><div class="fld f4">0,0 °<i class="sp"></i></div>
 <span class="cb rc"><svg><use href="#check"/></svg></span><span class="lb rd">Rendu</span>
 <svg class="si px" viewBox="0 0 16 16"><circle cx="8" cy="8" r="5" fill="#999"/><path d="M1 2l14 12M14 2L2 14" stroke="#555" stroke-width="1.700"/></svg>
 <svg class="si bub" viewBox="0 0 16 16"><path d="M8 1q8 0 8 6t-5 6l1 3-5-3Q0 13 0 7t8-6z" fill="#444"/><path d="M3.500 7h2M7 7h2M10.500 7h2" stroke="#fff" stroke-width="1.600"/></svg>
</div>
</div>

<div class="dlg">
 <div class="title"><i class="r"></i><i class="g"></i><i class="v"></i><span>Tampon</span></div>
 <div class="body">
  <div class="tabs"><span class="tab act">Paramètres</span><span class="tab">Journal</span></div>
  <div class="mid">
   <div class="pane">
    <label>Couche source</label>
    <div class="row"><div class="combo c1"><svg class="v16" viewBox="0 0 17 17"><path d="M2 3l5 12L11 3q1-2 3-1h2" fill="none" stroke="#999"/><path d="M1 3h2M10 3h2M14 2h2" stroke="#777" stroke-width="2"/></svg>TRAM [EPSG:2154]</div>
     <svg class="iter" viewBox="0 0 24 24"><path d="M8 4.500H5Q3.500 4.500 3.500 6v11q0 2 1.500 2h7M16 19.500h3q1.500 0 1.500-1.500V7q0-2-1.500-2h-7" fill="none" stroke="#4b8d57" stroke-width="4.500"/><path d="M8 4.500H5Q3.500 4.500 3.500 6v11q0 2 1.500 2h7M16 19.500h3q1.500 0 1.500-1.500V7q0-2-1.500-2h-7" fill="none" stroke="#8cc494" stroke-width="2.500"/><path d="M13.500 1v8L9 5zM10.500 15v8l4.500-4z" fill="#8cc494" stroke="#4b8d57"/></svg>
     <svg class="wr"><use href="#wrench"/></svg><span class="dots">...</span></div>
    <div class="ck off2"><span class="cb"></span>Entité(s) sélectionnée(s) uniquement</div>
    <label class="m9">Distance</label>
    <div class="row m7"><div class="spin s1">2,000000<svg class="del"><use href="#del"/></svg><i class="sp"></i></div><div class="combo c2">mètres</div>
     <svg class="dd" viewBox="0 0 26 20"><path d="M1 10l6-6v12z" fill="#888" stroke="#777"/><rect x="6.500" y="2.500" width="12" height="15" fill="#f3f3f3" stroke="#666"/><path d="M6 10h12M9 6h8M9 13.500h7" stroke="#555" stroke-width="1.300"/><path d="M22 14h5l-2.500 3z" fill="#666"/></svg></div>
    <label class="m8">Segments</label>
    <div class="spin m7">5<i class="sp"></i></div>
    <label>Style d'extrémité</label>
    <div class="combo">Plat</div>
    <label>Style de jointure</label>
    <div class="combo">Angle droit</div>
    <label>Limite d'angle droit</label>
    <div class="spin m7">2,000000<i class="sp"></i></div>
    <div class="ck"><span class="cb"><svg><use href="#check"/></svg></span>Regrouper le résultat</div>
    <label class="m9">Mis en tampon</label>
    <div class="row"><div class="path"><div class="clip"><span>E SIG/Master/Datagora/Données_3/TRAM/TRAM_POLYGONES.shp</span></div><svg class="del"><use href="#del"/></svg></div><span class="dots big">...</span></div>
    <div class="ck m9"><span class="cb"><svg><use href="#check"/></svg></span>Ouvrir le fichier en sortie après l'exécution de l'algorithme</div>
   </div>
   <div class="gut"><i></i></div>
   <div class="help"><div class="ht"><h2>Tampon</h2>
    <p>Cet algorithme<br>calcule une zone<br>tampon pour<br>toutes les entités<br>d'une couche<br>d'entrée, en<br>utilisant une<br>distance fixe ou<br>dynamique.</p>
    <p>Le paramètre de<br>segments<br>contrôle le<br>nombre de<br>segments de<br>ligne à utiliser<br>pour approximer<br>un quart de<br>cercle lors de la<br>création de<br>décalages<br>arrondis.</p>
    <p>Le paramètre de<br>style contrôle<br>comment les<br>terminaisons de<br>ligne sont<br>traitées dans le<br>tampon.</p>
    <p>Le paramètre de<br>style de jointure<br>spécifie si les<br>joints ronds, à<br>onglets ou<br>biseautés doivent</p></div>
    <div class="sb"><i class="up"></i><div class="thumb t2"></div><div class="track"></div><i class="down"></i></div>
   </div>
  </div>
  <div class="prog"><div class="pb">0%</div><span class="btn w80 dimb">Annuler</span></div>
  <div class="btns"><span class="btn w80">Help</span><span class="btn w223">Exécuter comme processus de lot...</span><span class="sp1"></span><span class="btn w80">Close</span><span class="btn w80 def">Exécuter</span></div>
 </div>
</div>
</body>
</html>
```
FILE: styles.css
```css
*{box-sizing:border-box}
body{margin:0;width:1440px;height:900px;overflow:hidden;position:relative;background:#ececec;font:13px/16px Inter,"Liberation Sans",sans-serif;letter-spacing:-.12px;color:#000}
.defs{position:absolute}
i,em{font-style:normal}
.app{display:flex;flex-direction:column;height:900px}
.bar{height:39px;flex:none;display:flex;align-items:center;border-bottom:1px solid #b3b3b3;background:linear-gradient(#f6f6f6,#eaeaea);letter-spacing:0}
.bar b{width:33px;height:32px;flex:none;display:flex;align-items:center;justify-content:center;font-weight:400}
.ic{width:24px;height:24px;flex:none;overflow:visible}
.bar .on{background:#d6d6d6;border:1px solid #a0a0a0;border-radius:3px;width:32px;margin-right:1px}
.bar .hov{background:#fbfbfb;border:1px solid #bdbdbd;border-radius:3px;width:32px;margin-right:1px}
.off{opacity:.36}
.dis .off{opacity:.33}
.gray{filter:saturate(.25)}
.grip{width:16px;height:18px;flex:none;background:radial-gradient(circle at .5px .5px,#b0b0b0 .7px,transparent .8px) 7.500px 0/3px 3px;clip-path:inset(0 2.500px 0 7.500px)}
.grip:first-child{width:12.5px;background-position:5px 0;clip-path:inset(0 2.500px 0 5px)}
.bar u{width:12px;flex:none;display:flex;justify-content:center;margin:0 .5px 0 -.5px}
u{display:flex;text-decoration:none}
u::before{content:"";border:4px solid transparent;border-top:4.500px solid #4a4a4a;border-bottom:0}
.bar s{width:7px;height:19px;flex:none;background:linear-gradient(#d0d0d0,#d0d0d0) 4px 0/1px 100% no-repeat}
.tg{font:bold 7.500px "DejaVu Sans",sans-serif;fill:#3a3220}
.red{fill:#e11}
.ta{font:14px "DejaVu Sans",sans-serif;fill:#444}
.t11{font:bold 7px "DejaVu Sans",sans-serif;fill:#555}
.ti{font:italic bold 15px "Liberation Serif",serif;fill:#fff}
.tt{font:bold 14px "Liberation Serif",serif;fill:#444}
.tq{font:16px "Liberation Serif",serif;fill:#fff}
.tw{font:bold 21px "Liberation Serif",serif;fill:#000}
.th{font:bold 17px "Liberation Sans",sans-serif;fill:#fff}
.te{font:15px "DejaVu Serif",serif;fill:#555}
.main{display:flex;height:714px;flex:none}
.left{width:435px;flex:none;display:flex;flex-direction:column;border-right:1px solid #a8a8a8;background:repeating-linear-gradient(#b0b0b0 0 1px,transparent 1px 3px) 431px 351px/1px 16px no-repeat}
.map{width:1005px;height:713px;flex:none;border-right:1px solid #ddd}
.dock{width:428px}
.grow{flex:1;display:flex;flex-direction:column}
.dt{height:20px;display:flex;align-items:center;gap:3px;padding:0 2px 0 4px;font-size:11px}
.dt span{flex:1;letter-spacing:.08px}
.wb{width:11px;height:11px}
.dtools{height:30px;display:flex;align-items:center;padding:0 0 2px 7px;gap:9.300px}
.i16{width:16px;height:16px;flex:none;overflow:visible}
.dtools em{width:1px;height:12px;background:#fff;border-right:1px solid #d0d0d0;margin:0 -1.700px}
.two u{margin:0 -4px 0 -5px}
.find{height:24px;border:1px solid #a9a9a9;border-radius:3px;background:#fff;display:flex;align-items:center;padding-left:8px;color:#767676}
.find span{margin-left:7px;letter-spacing:-.25px}
.s13{width:13px;height:13px}
.tree{height:262px;border:1px solid #a9a9a9;background:#fff;display:flex;overflow:hidden}
.tree ul{flex:1;margin:0;padding:0;list-style:none}
.tree li{height:18px;display:flex;align-items:center;gap:6px;padding-left:8px;white-space:nowrap}
.tree li::before{content:"";border:4px solid transparent;border-left:5px solid #555;border-right:0;margin-right:4px}
.sb{width:14px;border-left:1px solid #b5b5b5;display:flex;flex-direction:column;flex:none;align-self:stretch}
.sb i{height:13px;display:flex;align-items:center;justify-content:center;background:#fff}
.up::before{content:"";border:4px solid transparent;border-bottom:4px solid #555;border-top:0}
.down::before{content:"";border:4px solid transparent;border-top:4px solid #555;border-bottom:0}
.thumb{background:linear-gradient(90deg,#f0f0f0,#fff);border:solid #b5b5b5;border-width:1px 0}
.t1{height:131px}.t2{height:382px}
.track{flex:1;background:#e2e2e2;border-bottom:1px solid #b5b5b5}
.split{height:6px;background:radial-gradient(circle at .5px .5px,#b0b0b0 .7px,transparent .8px) 0 2px/3px 3px;clip-path:inset(2px 212px 1px 207px)}
.layers{flex:1;border:1px solid #b0b0b0;background:#fff;font-weight:700;letter-spacing:0}
.ly{height:18px;display:flex;align-items:center;padding-left:23px}
.open,.last{position:relative}
.last{margin-top:5px}
.open::before{content:"";position:absolute;left:6px;border:4.500px solid transparent;border-top:5px solid #555;border-bottom:0}
.cb{width:14px;height:14px;flex:none;border:1px solid #b3b3b3;background:#fff;display:block}
.cb svg{width:14px;height:14px;margin:-1px;display:block}
.sw{width:16px;height:16px;margin:0 4px 0 6px;flex:none;border:1px solid}
.line{height:2px;border:0;background:#e9bcbc}
.green{background:#81b56f;border-color:#55814a}.lilac{background:#cfbad5;border-color:#97839e}.slate{background:#7c8a8e;border-color:#5b676b}
.ras{border:0;width:13px;height:13px;margin:0 5px 0 8px}
.nm{padding:1px 2px}
.wide{letter-spacing:.13px}
.sel{flex:1;border:1px solid #a9c9ea;background:linear-gradient(#f7fbff,#e6f1fd);height:18px;padding:0 1px;line-height:17px;text-decoration:underline;border-radius:2px}
.dim{color:#7b7b7b;font-style:italic}
.status{height:31px;padding-bottom:1px;display:flex;align-items:center;border-top:1px solid #a8a8a8;font-size:11px;white-space:nowrap;letter-spacing:0}
.loc{width:262px;height:24px;margin-left:4px;border:1px solid #a9a9a9;border-radius:3px;background:#fff;display:flex;align-items:center;gap:7px;padding-left:8px;font-size:13px;letter-spacing:-.15px;color:#767676;flex:none}
.msg{width:347px;margin-left:8px;flex:none}
.coord{width:68px;flex:none}
.fld{height:22px;flex:none;background:#fff;border:1px solid #a9a9a9;border-radius:3px;padding-left:6px;line-height:20px;display:flex;overflow:hidden}
.f1{width:125px}.f2{width:94px;padding-left:3px}.f3{width:96px;padding-left:4px}.f4{width:92px;padding-left:4px}
.sp,.dc{margin-left:auto;width:14px;border-left:1px solid #b5b5b5;background:linear-gradient(#fff,#eee);display:flex;flex-direction:column;align-items:center;justify-content:center;gap:4px;align-self:stretch;flex:none}
.dc{width:19px}
.sp::before{content:"";border:4px solid transparent;border-bottom:4.500px solid #555;border-top:0}
.sp::after,.dc::after{content:"";border:4px solid transparent;border-top:4.500px solid #555;border-bottom:0}
.si{width:16px;height:16px;flex:none;margin:0 4px 0 5px}
.ech{width:37px;margin:0 4px 0 9px}
.lock{width:14px;margin:0 8px 0 11px}
.status .lb{flex:none}
.lock+.lb{width:36px}
.rot{width:53px;margin-left:9px}
.rc{margin-left:6px}.rd{width:32px;margin-left:5px}
.px{margin-left:17px}.bub{margin-left:21px}
.dlg{position:absolute;left:793px;top:118px;width:637px;height:736px;background:#ececec;border-radius:6px;box-shadow:0 0 1px rgba(0,0,0,.5),0 18px 40px rgba(0,0,0,.5);display:flex;flex-direction:column}
.title{height:22px;flex:none;border-radius:6px 6px 0 0;background:linear-gradient(#e9e6e9,#d2cfd2);border-bottom:1px solid #b1aeb1;display:flex;align-items:center;gap:8px;padding-left:8px;color:#333}
.title i{width:12px;height:12px;border-radius:50%}
.r{background:#fc4b45;border:1px solid #de3c37}.g{background:#d1d0d1;border:1px solid #bbb}.v{background:#05cd2f;border:1px solid #10b52c}
.title span{margin-left:226px;letter-spacing:-.1px}
.body{padding:11px 11px 0 11px;flex:1;display:flex;flex-direction:column}
.tabs{display:flex;align-items:flex-end;height:27px;margin-bottom:-1px;position:relative;flex:none}
.tab{height:25px;width:68px;text-align:center;border:1px solid #b0b0b0;border-left:0;background:#e4e4e4;line-height:24px;border-radius:0 3px 0 0}
.act{height:28px;width:94px;background:linear-gradient(#fff,#f5f5f5);border:1px solid #b0b0b0;border-bottom:0;line-height:27px;border-radius:3px 3px 0 0;margin-bottom:-1px}
.mid{display:flex;height:583px;flex:none}
.pane{width:468px;border:1px solid #b0b0b0;padding:5px 5px 0;display:flex;flex-direction:column;flex:none;box-shadow:inset 1px 1px #f4f4f4}
.pane label{height:16px;margin-top:6px;flex:none}
.pane label:first-child{margin-top:0}
.pane .m7{margin-top:7px}.pane .m8{margin-top:8px}.pane .m9{margin-top:9px}
.row{display:flex;align-items:flex-start;margin-top:6px;height:24px;flex:none}
.combo{height:24px;flex:none;border:1px solid #adadad;border-radius:3px;background:linear-gradient(#fff,#ececec);margin-top:6px;padding:0 6px 0 4px;display:flex;align-items:center;gap:3px}
.combo::after{content:"";border:4.500px solid transparent;border-top:5px solid #555;border-bottom:0;margin-left:auto}
.row .combo{margin-top:0}
.c1{width:355px}.v16{width:17px;height:17px}
.iter{width:24px;height:24px;margin-left:9px}
.wr{width:25px;height:25px;margin-left:12px}
.dots{margin-left:9px;width:23px;height:19px;border:1px solid #a9a9a9;border-radius:3px;background:linear-gradient(#fff,#f0f0f0);font-size:11px;line-height:15px;text-align:center;position:relative}
.dots::after{content:"";position:absolute;right:1px;bottom:3px;border:2.500px solid transparent;border-top:3px solid #444;border-bottom:0}
.big{height:24px;line-height:20px;margin-left:6px}
.ck{display:flex;height:16px;align-items:center;gap:5px;margin-top:9px;flex:none}
.off2{color:#8a8a8a;margin-top:11px;letter-spacing:-.06px}.off2 .cb{background:#eee}
.spin{height:24px;flex:none;border:1px solid #adadad;border-radius:3px;background:#fff;padding-left:4px;display:flex;align-items:center;overflow:hidden}
.row.m7{height:23px}
.s1{width:318px}.s1 .sp{margin-left:10px}
.del{width:14px;height:11px;flex:none;margin-left:auto}
.c2{width:92px;margin-left:10px}
.dd{width:26px;height:20px;margin:2px 0 0 9px}
.path{width:427px;height:24px;border:1px solid #adadad;border-radius:3px;background:#fff;display:flex;align-items:center;padding-right:7px}
.clip{width:396px;overflow:hidden;display:flex;justify-content:flex-end;white-space:nowrap;letter-spacing:-.17px}
.gut{width:16px;position:relative}
.gut::before{content:"";position:absolute;left:3px;top:-25px;border:4px solid transparent;border-left:5px solid #444;border-right:0}
.gut i{position:absolute;left:8px;top:272px;width:1px;height:16px;background:repeating-linear-gradient(#aaa 0 1px,transparent 1px 3px)}
.help{width:131px;height:610px;margin-top:-26px;background:#fff;border:1px solid #b0b0b0;display:flex;color:#5a5a5a}
.ht{flex:1;padding:5px 0 0 4px;overflow:hidden;white-space:nowrap;letter-spacing:-.05px}
.ht h2{margin:0 0 14px;font-size:20px;line-height:21px;font-weight:700;letter-spacing:-.95px}
.ht p{margin:0 0 12px}
.prog{display:flex;gap:6px;margin-top:29px}
.pb{flex:1;height:24px;border:1px solid #a9a9a9;border-radius:3px;background:#fff;text-align:center;line-height:23px}
.btns{display:flex;gap:6px;margin-top:6px}
.btn{height:24px;border:1px solid #a9a9a9;border-radius:3px;background:linear-gradient(#fff,#ececec);text-align:center;line-height:23px;white-space:nowrap}
.w80{width:80px}.w223{width:223px}.sp1{flex:1}
.dimb{color:#8d8d8d;border-color:#bdbdbd}
.def{border-color:#4e94dc;background:linear-gradient(#fff,#dfe9f4)}
```
